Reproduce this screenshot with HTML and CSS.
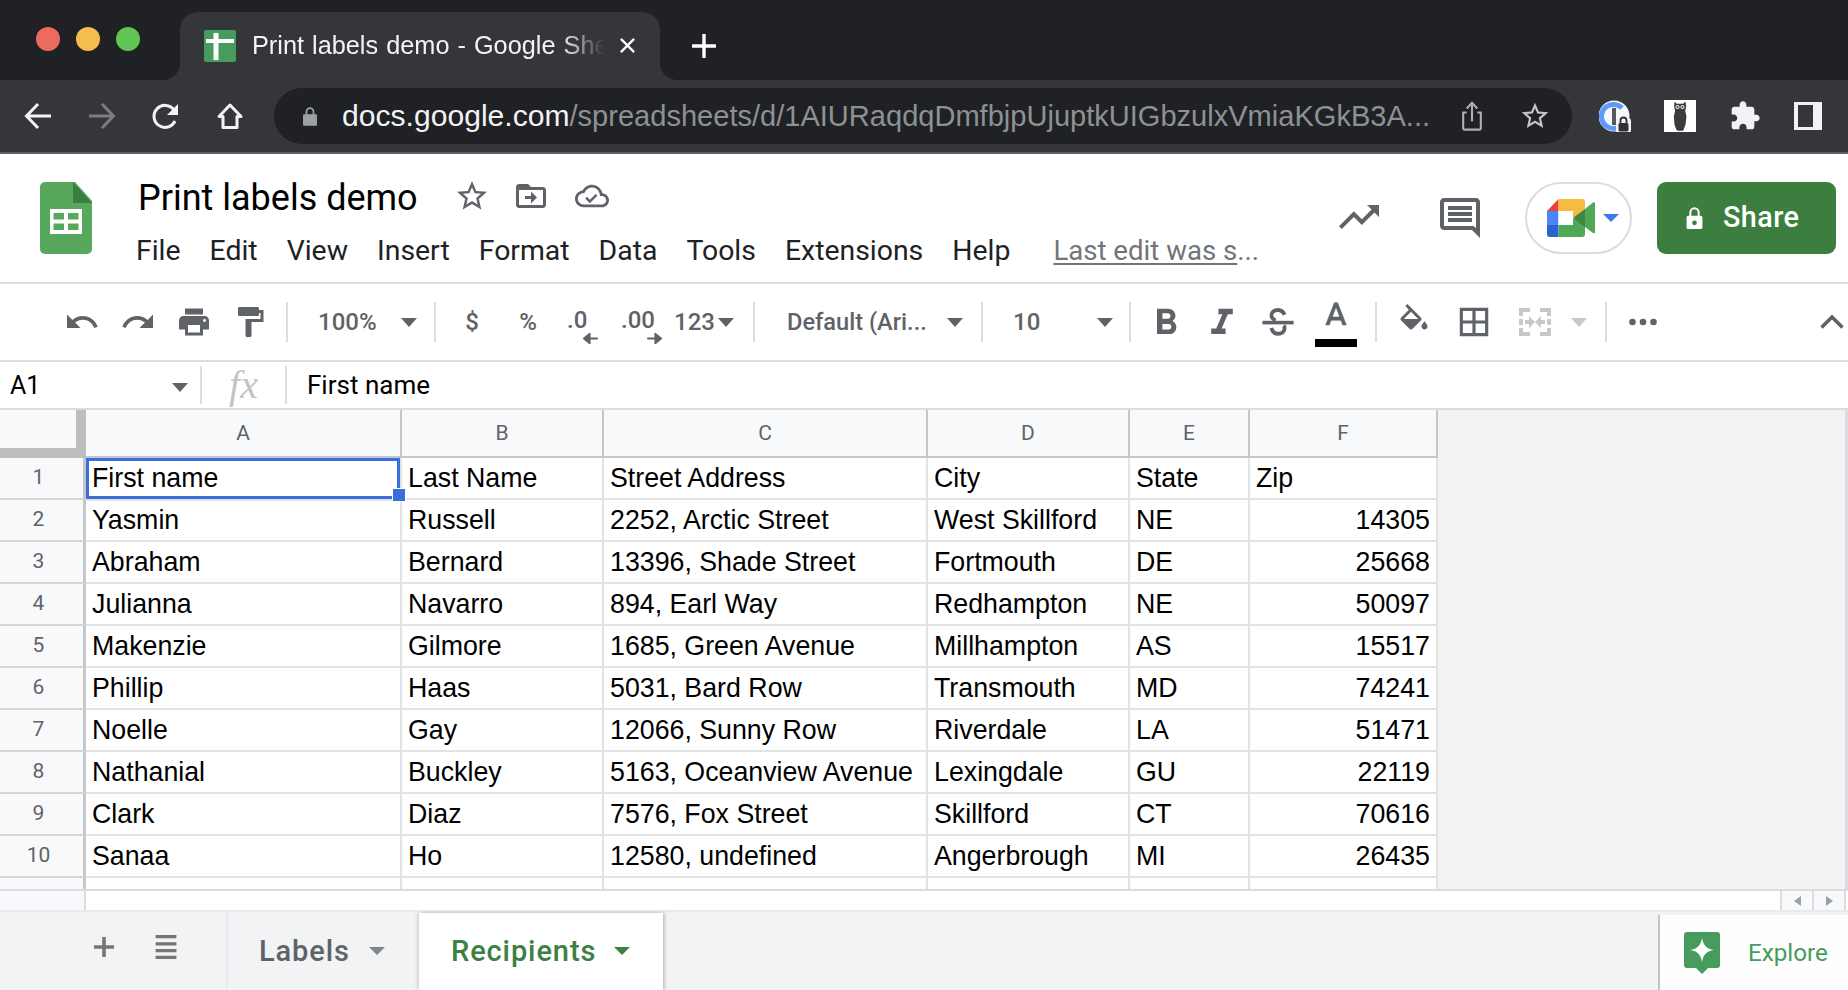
FILE: index.html
```html
<!DOCTYPE html>
<html lang="en">
<head>
<meta charset="utf-8">
<title>Print labels demo - Google Sheets</title>
<link rel="stylesheet" href="styles.css">
</head>
<body>
<div class="page">
  <div class="tabstrip">
    <div class="lights"><i class="red"></i><i class="yellow"></i><i class="green"></i></div>
    <div class="tab">
      <svg class="favicon" viewBox="0 0 32 32"><rect width="32" height="32" rx="2" fill="#459c5d"/><path d="M9.500 3h5v6H30v4H14.500v17h-5V13H2V9h7.500z" fill="#fff"/></svg>
      <span class="tabtitle">Print labels demo - Google Sheets</span>
      <svg class="tabclose" viewBox="0 0 18 18"><path d="M2 2l14 14M16 2L2 16" stroke="#fff" stroke-width="2.400"/></svg>
    </div>
    <svg class="newtab" viewBox="0 0 24 24"><path d="M12 1v22M1 12h22" stroke="#fff" stroke-width="3.400" stroke-linecap="round"/></svg>
  </div>

  <div class="browserbar">
    <div class="navbtn"><svg viewBox="0 0 28 28" width="28" height="28"><path d="M27 14H3M14 2L2.500 14 14 26" fill="none" stroke="#f1f3f4" stroke-width="3"/></svg></div>
    <div class="navbtn"><svg viewBox="0 0 28 28" width="28" height="28"><path d="M1 14h24M14 2l11.500 12L14 26" fill="none" stroke="#7b7c7f" stroke-width="3"/></svg></div>
    <div class="navbtn"><svg viewBox="0 0 28 28" width="28" height="28"><path d="M23 19a11 11 0 1 1-1-11" fill="none" stroke="#f1f3f4" stroke-width="3"/><path d="M26 2v11H15z" fill="#f1f3f4"/></svg></div>
    <div class="navbtn"><svg viewBox="0 0 28 28" width="28" height="28"><path d="M14 3L3 14.500h4V25.500h14V14.500h4z" fill="none" stroke="#f1f3f4" stroke-width="3" stroke-linejoin="round"/></svg></div>
    <div class="omnibox">
      <svg class="lockicon" viewBox="0 0 16 22"><path d="M1 9h14a1 1 0 0 1 1 1v11a1 1 0 0 1-1 1H1a1 1 0 0 1-1-1V10a1 1 0 0 1 1-1z" fill="#9aa0a6"/><path d="M4 10V6a4 4 0 0 1 8 0v4" fill="none" stroke="#9aa0a6" stroke-width="2"/></svg>
      <span class="url"><b>docs.google.com</b>/spreadsheets/d/1AIURaqdqDmfbjpUjuptkUIGbzulxVmiaKGkB3A...</span>
      <svg class="omni-share" viewBox="0 0 24 34"><path d="M6 13H2v18a1.500 1.500 0 0 0 1.500 1.500h17A1.500 1.500 0 0 0 22 31V13h-4M12 23V3M6 8.500L12 2l6 6.500" fill="none" stroke="#aeb0b3" stroke-width="2.400"/></svg>
      <svg class="omni-star" viewBox="0 0 24 24"><path d="M22 9.240l-7.190-.62L12 2 9.190 8.630 2 9.240l5.460 4.730L5.820 21 12 17.270 18.180 21l-1.630-7.030L22 9.240zM12 15.400l-3.760 2.270 1-4.280-3.320-2.880 4.380-.38L12 6.100l1.710 4.040 4.380.38-3.320 2.880 1 4.280L12 15.400z" fill="#c4c6c8"/></svg>
    </div>
    <div class="extensions">
      <svg class="ext-pass" viewBox="0 0 32 32"><circle cx="15" cy="16" r="15.500" fill="#f4f7fb"/><path d="M23 8A12 12 0 1 0 19 27.500" fill="none" stroke="#5a9cf8" stroke-width="5"/><rect x="13" y="8" width="4" height="17" fill="#56595e"/><rect x="17" y="18" width="15" height="15" rx="3" fill="#f4f4f4"/><rect x="19.500" y="23" width="10" height="8.500" rx="1.500" fill="#2f3134"/><path d="M21.500 23v-2.500a3 3 0 0 1 6 0V23" fill="none" stroke="#2f3134" stroke-width="1.800"/></svg>
      <svg class="ext-owl" viewBox="0 0 32 52"><rect width="32" height="52" fill="#fff"/><path d="M7 3l4 3h10l4-3 1 8-1.500 7 2 9-1.500 13-3 8-1 2h-9l-2-2-3-8L6 27l2-9-1.500-7z" fill="#3a3b3d"/><circle cx="12" cy="11.500" r="3.500" fill="#dcdcdc"/><circle cx="20" cy="11.500" r="3.500" fill="#dcdcdc"/><circle cx="12" cy="11.500" r="1.400" fill="#222"/><circle cx="20" cy="11.500" r="1.400" fill="#222"/></svg>
      <svg class="ext-puzzle" viewBox="0 0 24 24"><path d="M20.500 11H19V7c0-1.100-.9-2-2-2h-4V3.500C13 2.120 11.880 1 10.500 1S8 2.120 8 3.500V5H4c-1.100 0-1.990.9-1.990 2v3.800H3.500c1.490 0 2.700 1.210 2.700 2.700s-1.210 2.700-2.700 2.700H2V20c0 1.100.9 2 2 2h3.800v-1.500c0-1.490 1.210-2.700 2.700-2.700 1.490 0 2.700 1.210 2.700 2.700V22H17c1.100 0 2-.9 2-2v-4h1.500c1.380 0 2.500-1.120 2.500-2.500S21.880 11 20.500 11z" fill="#f1f3f4"/></svg>
      <div class="ext-panel"></div>
    </div>
  </div>

  <div class="docheader">
    <svg class="sheetlogo" viewBox="0 0 52 72"><path d="M5 0h30l17 19v48a5 5 0 0 1-5 5H5a5 5 0 0 1-5-5V5a5 5 0 0 1 5-5z" fill="#57a75c"/><path d="M33 0l19 21H33z" fill="#3a7d42"/><path d="M10 27h32v25H10zm3.500 4v6.500H24V31zm14.500 0v6.500h10.500V31zM13.500 41.500V48H24v-6.500zm14.500 0V48h10.500v-6.500z" fill="#fff" fill-rule="evenodd"/></svg>
    <div class="titleblock">
      <div class="titlerow">
        <span class="doctitle">Print labels demo</span>
        <svg class="ti-star" viewBox="0 0 24 24"><path d="M22 9.240l-7.190-.62L12 2 9.190 8.630 2 9.240l5.460 4.730L5.820 21 12 17.270 18.180 21l-1.630-7.030L22 9.240zM12 15.400l-3.760 2.270 1-4.280-3.320-2.880 4.380-.38L12 6.100l1.710 4.040 4.380.38-3.320 2.880 1 4.280L12 15.400z"/></svg>
        <svg class="ti-folder" viewBox="0 0 24 24"><path d="M20 6h-8l-2-2H4c-1.100 0-2 .9-2 2v12c0 1.100.9 2 2 2h16c1.100 0 2-.9 2-2V8c0-1.100-.9-2-2-2zm0 12H4V8h16v10zm-8-1l4-4-4-4v3H8v2h4z"/></svg>
        <svg class="ti-cloud" viewBox="0 0 24 24"><path d="M19.350 10.040C18.670 6.590 15.640 4 12 4 9.110 4 6.600 5.640 5.350 8.040 2.340 8.360 0 10.910 0 14c0 3.310 2.690 6 6 6h13c2.760 0 5-2.240 5-5 0-2.640-2.050-4.780-4.650-4.960zM19 18H6c-2.210 0-4-1.790-4-4 0-2.050 1.530-3.760 3.560-3.970l1.070-.11.5-.95C8.080 7.140 9.940 6 12 6c2.620 0 4.880 1.860 5.390 4.430l.3 1.500 1.530.11c1.560.1 2.780 1.410 2.780 2.960 0 1.650-1.350 3-3 3zm-8.500-3.300l-2.100-2.100-1.200 1.200 3.300 3.300 5.300-5.300-1.200-1.200z"/></svg>
      </div>
      <div class="menubar">
        <span>File</span><span>Edit</span><span>View</span><span>Insert</span><span>Format</span><span>Data</span><span>Tools</span><span>Extensions</span><span>Help</span>
        <span class="lastedit"><u>Last edit was s</u>...</span>
      </div>
    </div>
    <div class="headeractions">
      <svg class="ha-trend" viewBox="0 0 24 24"><path d="M16 6l2.290 2.290-4.880 4.880-4-4L2 16.590 3.410 18l6-6 4 4 6.300-6.290L22 12V6z"/></svg>
      <svg class="ha-comment" viewBox="0 0 24 24"><path d="M20 2H4c-1.100 0-2 .9-2 2v12c0 1.100.9 2 2 2h14l4 4V4c0-1.100-.9-2-2-2zm0 15.170L18.830 16H4V4h16v13.170zM6 12h12v2H6zm0-3h12v2H6zm0-3h12v2H6z"/></svg>
      <div class="meetpill">
        <svg class="meetlogo" viewBox="0 0 48 38">
          <path d="M11.500 0L0 12h11.500z" fill="#ea4335"/>
          <path d="M11.500 0H35a3 3 0 0 1 3 3v15H26v-6H11.500z" fill="#f6bb40"/>
          <path d="M0 12h11.500v14H0z" fill="#4a86f7"/>
          <path d="M0 26h11.500v12H3a3 3 0 0 1-3-3z" fill="#2b62d0"/>
          <path d="M11.500 26H26v-6h12v15a3 3 0 0 1-3 3H11.500z" fill="#4fa954"/>
          <path d="M26 19L38 10v18z" fill="#3a8a42"/>
          <path d="M38 10l8-6.500c1-.6 2-.2 2 1V33c0 1.200-1 1.600-2 1L38 28z" fill="#4fa954"/>
          <path d="M11.500 12H26v14H11.500z" fill="#fff"/>
        </svg>
        <i class="meetcaret"></i>
      </div>
      <div class="sharebtn">
        <svg viewBox="0 0 24 30" width="19" height="24"><path d="M20 12h-1.500V8a6.500 6.500 0 0 0-13 0v4H4a2 2 0 0 0-2 2v13a2 2 0 0 0 2 2h16a2 2 0 0 0 2-2V14a2 2 0 0 0-2-2zM12 24a3 3 0 1 1 0-6 3 3 0 0 1 0 6zM8 12V8a4 4 0 0 1 8 0v4z" fill="#fff"/></svg>
        <span>Share</span>
      </div>
    </div>
  </div>

  <div class="toolbar">
    <div class="tbtn"><svg viewBox="0 0 24 24"><path d="M12.500 8c-2.650 0-5.050.99-6.900 2.600L2 7v9h9l-3.620-3.620c1.390-1.160 3.160-1.880 5.120-1.880 3.540 0 6.550 2.310 7.600 5.500l2.370-.78C21.080 11.030 17.150 8 12.500 8z"/></svg></div>
    <div class="tbtn"><svg viewBox="0 0 24 24"><path d="M18.400 10.600C16.550 8.990 14.150 8 11.500 8c-4.650 0-8.580 3.030-9.960 7.220L3.900 16c1.050-3.190 4.050-5.500 7.600-5.500 1.950 0 3.730.72 5.120 1.880L13 16h9V7l-3.600 3.600z"/></svg></div>
    <div class="tbtn"><svg viewBox="0 0 24 24"><path d="M19 8H5c-1.660 0-3 1.340-3 3v6h4v4h12v-4h4v-6c0-1.660-1.340-3-3-3zm-3 11H8v-5h8v5zm3-7c-.55 0-1-.45-1-1s.45-1 1-1 1 .45 1 1-.45 1-1 1zm-1-9H6v4h12V3z"/></svg></div>
    <div class="tbtn"><svg viewBox="0 0 24 24"><path d="M18 4V3c0-.55-.45-1-1-1H5c-.55 0-1 .45-1 1v4c0 .55.45 1 1 1h12c.55 0 1-.45 1-1V6h1v4H9v11c0 .55.45 1 1 1h2c.55 0 1-.45 1-1v-9h8V4h-3z"/></svg></div>
    <i class="tsep ml8"></i>
    <div class="ddl zoomddl"><span>100%</span><i class="caret"></i></div>
    <i class="tsep"></i>
    <div class="tbtn txt ml8">$</div>
    <div class="tbtn txt">%</div>
    <div class="tbtn dec"><span>.0</span><svg class="decarrow decleft" viewBox="0 0 16 12"><path d="M16 6H5M7 1L1 6l6 5V1z"/></svg></div>
    <div class="tbtn dec"><span>.00</span><svg class="decarrow decright" viewBox="0 0 16 12"><path d="M0 6h11M9 1l6 5-6 5V1z"/></svg></div>
    <div class="ddl numddl"><span>123</span><i class="caret"></i></div>
    <i class="tsep"></i>
    <div class="ddl fontddl"><span>Default (Ari...</span><i class="caret"></i></div>
    <i class="tsep"></i>
    <div class="ddl sizeddl"><span>10</span><i class="caret"></i></div>
    <i class="tsep"></i>
    <div class="tbtn ml7"><svg viewBox="0 0 24 24"><path d="M15.600 10.790c.97-.67 1.650-1.770 1.650-2.790 0-2.260-1.750-4-4-4H7v14h7.040c2.090 0 3.710-1.700 3.710-3.790 0-1.520-.86-2.820-2.150-3.420zM10 6.500h3c.83 0 1.500.67 1.500 1.500s-.67 1.500-1.500 1.500h-3v-3zm3.500 9H10v-3h3.500c.83 0 1.500.67 1.500 1.500s-.67 1.500-1.500 1.500z" transform="translate(-2.400 -1.600) scale(1.200)"/></svg></div>
    <div class="tbtn"><svg viewBox="0 0 24 24"><path d="M10 4v3h2.210l-3.420 8H6v3h8v-3h-2.210l3.420-8H18V4z" transform="translate(-2.400 -1.600) scale(1.200)"/></svg></div>
    <div class="tbtn"><svg viewBox="0 0 30 30"><path d="M20.500 9C19.500 6.500 17.500 5 15 5c-3.200 0-5.500 1.800-5.500 4.500 0 2 1.200 3.300 3.500 4.200M9.500 20c.8 3 3 4.800 5.500 4.800 3.200 0 5.500-1.800 5.500-4.600 0-1-.3-1.700-.8-2.200" fill="none" stroke="#5f6368" stroke-width="3.200"/><rect x="2" y="14" width="26" height="3"/></svg></div>
    <div class="tbtn colorA ml2"><svg viewBox="0 0 24 24" class="aglyph"><path d="M11 3L5.500 17h2.250l1.120-3h6.250l1.120 3h2.250L13 3h-2zm-1.380 9L12 5.670 14.380 12H9.620z" stroke="#5f6368" stroke-width=".4"/></svg><i class="colorbar"></i></div>
    <i class="tsep ml11"></i>
    <div class="tbtn ml9"><svg viewBox="0 0 24 24"><path d="M16.560 8.940L7.620 0 6.210 1.410l2.380 2.380-5.150 5.150c-.59.59-.59 1.540 0 2.120l5.500 5.500c.29.29.68.44 1.060.44s.77-.15 1.060-.44l5.500-5.500c.59-.58.59-1.530 0-2.120zM5.210 10L10 5.210 14.790 10H5.210zM19 11.500s-2 2.170-2 3.500c0 1.100.9 2 2 2s2-.9 2-2c0-1.330-2-3.500-2-3.500z"/></svg></div>
    <div class="tbtn ml4"><svg class="bordersicon" viewBox="0 0 24 24"><path d="M3 3v18h18V3H3zm8 16H5v-6h6v6zm0-8H5V5h6v6zm8 8h-6v-6h6v6zm0-8h-6V5h6v6z"/></svg></div>
    <div class="tbtn ml5"><svg class="mergeicon" viewBox="0 0 32 28"><path d="M0 0h11v4H4v4H0zM21 0h11v8h-4V4h-7zM0 11h4v6H0zM28 11h4v6h-4zM0 20h4v4h7v4H0zM28 20h4v8H21v-4h7zM6 12h4V8l6 6-6 6v-4H6zM26 12h-4V8l-6 6 6 6v-4h4z" fill="#c6c7c8"/></svg></div>
    <div class="mergecaret"><i class="caret muted"></i></div>
    <i class="tsep ml10"></i>
    <div class="tbtn ml8"><svg viewBox="0 0 24 24"><circle cx="5" cy="12" r="2.200"/><circle cx="12" cy="12" r="2.200"/><circle cx="19" cy="12" r="2.200"/></svg></div>
    <svg class="collapse" viewBox="0 0 24 16"><path d="M1.500 13.500L12 3l10.500 10.500" fill="none" stroke="#5f6368" stroke-width="3.600"/></svg>
  </div>

  <div class="formulabar">
    <div class="namebox"><span>A1</span><i class="caret"></i></div>
    <i class="fsep"></i>
    <span class="fx">fx</span>
    <i class="fsep"></i>
    <span class="ftext">First name</span>
  </div>

  <div class="sheet">
    <div class="corner"><i></i></div>
    <div class="ch">A</div><div class="ch">B</div><div class="ch">C</div><div class="ch">D</div><div class="ch">E</div><div class="ch">F</div>
    <div class="empty"></div>

    <div class="rh">1</div><div class="c sel">First name</div><div class="c">Last Name</div><div class="c">Street Address</div><div class="c">City</div><div class="c">State</div><div class="c">Zip</div>
    <div class="rh">2</div><div class="c">Yasmin</div><div class="c">Russell</div><div class="c">2252, Arctic Street</div><div class="c">West Skillford</div><div class="c">NE</div><div class="c n">14305</div>
    <div class="rh">3</div><div class="c">Abraham</div><div class="c">Bernard</div><div class="c">13396, Shade Street</div><div class="c">Fortmouth</div><div class="c">DE</div><div class="c n">25668</div>
    <div class="rh">4</div><div class="c">Julianna</div><div class="c">Navarro</div><div class="c">894, Earl Way</div><div class="c">Redhampton</div><div class="c">NE</div><div class="c n">50097</div>
    <div class="rh">5</div><div class="c">Makenzie</div><div class="c">Gilmore</div><div class="c">1685, Green Avenue</div><div class="c">Millhampton</div><div class="c">AS</div><div class="c n">15517</div>
    <div class="rh">6</div><div class="c">Phillip</div><div class="c">Haas</div><div class="c">5031, Bard Row</div><div class="c">Transmouth</div><div class="c">MD</div><div class="c n">74241</div>
    <div class="rh">7</div><div class="c">Noelle</div><div class="c">Gay</div><div class="c">12066, Sunny Row</div><div class="c">Riverdale</div><div class="c">LA</div><div class="c n">51471</div>
    <div class="rh">8</div><div class="c">Nathanial</div><div class="c">Buckley</div><div class="c">5163, Oceanview Avenue</div><div class="c">Lexingdale</div><div class="c">GU</div><div class="c n">22119</div>
    <div class="rh">9</div><div class="c">Clark</div><div class="c">Diaz</div><div class="c">7576, Fox Street</div><div class="c">Skillford</div><div class="c">CT</div><div class="c n">70616</div>
    <div class="rh">10</div><div class="c">Sanaa</div><div class="c">Ho</div><div class="c">12580, undefined</div><div class="c">Angerbrough</div><div class="c">MI</div><div class="c n">26435</div>
    <div class="rh last"></div><div class="c last"></div><div class="c last"></div><div class="c last"></div><div class="c last"></div><div class="c last"></div><div class="c last"></div>
  </div>

  <div class="hscroll">
    <div class="hs-gutter"></div>
    <div class="hs-track"></div>
    <div class="hs-btn"><i class="tri-left"></i></div>
    <div class="hs-btn"><i class="tri-right"></i></div>
    <div class="hs-end"></div>
  </div>

  <div class="sheettabs">
    <svg class="st-add" viewBox="0 0 22 22"><path d="M11 1v20M1 11h20" stroke="#757575" stroke-width="3.600"/></svg>
    <svg class="st-list" viewBox="0 0 26 30"><path d="M0 2h26M0 11h26M0 19.500h26M0 28h26" stroke="#757575" stroke-width="4"/></svg>
    <div class="stab"><span>Labels</span><i class="stcaret"></i></div>
    <div class="stab active"><span>Recipients</span><i class="stcaret"></i></div>
    <div class="explore">
      <svg viewBox="0 0 36 42" width="36" height="42"><path d="M3 0h30a3 3 0 0 1 3 3v30a3 3 0 0 1-3 3h-9l-6 6-6-6H3a3 3 0 0 1-3-3V3a3 3 0 0 1 3-3z" fill="#459c5d"/><path d="M18 6c1.200 7.500 4.500 10.800 12 12-7.500 1.200-10.800 4.500-12 12-1.200-7.500-4.500-10.800-12-12 7.500-1.200 10.800-4.500 12-12z" fill="#fff"/></svg>
      <span>Explore</span>
    </div>
  </div>
</div>
</body>
</html>
```

FILE: styles.css
```css
* { box-sizing: border-box; }
html, body { margin: 0; padding: 0; height: 100%; overflow: hidden; background: #fff; }
i { display: block; font-style: normal; }
svg { display: block; flex: none; }
.page { width: 1848px; height: 990px; display: flex; flex-direction: column; overflow: hidden; font-family: Roboto, "Liberation Sans", sans-serif; }

/* browser tab strip */
.tabstrip { height: 80px; flex: none; background: #202124; display: flex; align-items: flex-end; }
.lights { display: flex; gap: 16px; width: 180px; padding-left: 36px; align-self: flex-start; margin-top: 27px; }
.lights i { width: 24px; height: 24px; border-radius: 50%; }
.red { background: #ee6a5f; }
.yellow { background: #f5bd4f; }
.green { background: #61c554; }
.tab { position: relative; width: 480px; height: 68px; background: #35363a; border-radius: 18px 18px 0 0; display: flex; align-items: center; padding-left: 24px; padding-bottom: 1px; }
.tab::before, .tab::after { content: ""; position: absolute; bottom: 0; width: 16px; height: 16px; }
.tab::before { left: -16px; background: radial-gradient(circle at 0 0, transparent 15.500px, #35363a 16px); }
.tab::after { right: -16px; background: radial-gradient(circle at 100% 0, transparent 15.500px, #35363a 16px); }
.favicon { width: 32px; height: 32px; }
.tabtitle { width: 352px; margin-left: 16px; font: 25.300px "Liberation Sans", sans-serif; word-spacing: 1px; color: #f1f3f4; white-space: nowrap; overflow: hidden; -webkit-mask-image: linear-gradient(90deg, #000 88%, transparent 100%); mask-image: linear-gradient(90deg, #000 88%, transparent 100%); }
.tabclose { width: 17px; height: 17px; margin-left: 15px; }
.newtab { width: 24px; height: 24px; margin-left: 32px; align-self: center; margin-top: 12px; }

/* browser toolbar */
.browserbar { height: 74px; flex: none; background: #35363a; border-bottom: 2px solid #5f6063; display: flex; align-items: center; padding: 0 0 0 6px; }
.navbtn { width: 64px; display: flex; justify-content: center; }
.omnibox { width: 1298px; height: 56px; margin-left: 12px; border-radius: 28px; background: #202124; display: flex; align-items: center; padding-left: 29px; }
.lockicon { width: 14px; height: 20px; }
.url { width: 1112px; margin-left: 25px; font: 29.050px "Liberation Sans", sans-serif; color: #8e9194; white-space: nowrap; overflow: hidden; }
.url b { font-weight: 400; font-size: 30.100px; color: #f1f3f4; }
.omni-share { width: 24px; height: 30px; margin-left: 6px; }
.omni-star { width: 32px; height: 32px; margin-left: 35px; }
.extensions { display: flex; align-items: center; margin-left: 27px; }
.ext-pass { width: 32px; height: 32px; }
.ext-owl { width: 32px; height: 32px; margin-left: 33px; background: #fff; }
.ext-puzzle { width: 32px; height: 32px; margin-left: 33px; }
.ext-panel { width: 28px; height: 28px; margin-left: 33px; border: solid #f1f3f4; border-width: 3px 9px 3px 4px; }

/* doc header */
.docheader { height: 130px; flex: none; border-bottom: 2px solid #dadce0; display: flex; padding-left: 40px; }
.sheetlogo { width: 52px; height: 72px; margin-top: 28px; }
.titleblock { margin-left: 45px; display: flex; flex-direction: column; }
.titlerow { display: flex; align-items: center; height: 48px; margin-top: 18px; }
.doctitle { font-size: 36px; color: #000; margin-left: 1px; padding-top: 3px; line-height: 44px; width: 319px; white-space: nowrap; }
.titlerow svg { fill: #5f6368; }
.ti-star { width: 36px; height: 36px; margin-left: -3px; }
.ti-folder { width: 36px; height: 36px; margin-left: 23px; }
.ti-cloud { width: 34px; height: 34px; margin-left: 26px; }
.menubar { display: flex; align-items: baseline; gap: 29px; margin-top: 13px; margin-left: -1px; font-size: 28.400px; line-height: 36px; color: #202124; white-space: nowrap; }
.lastedit { color: #70757a; margin-left: 14px; font-size: 27.600px; }
.lastedit u { text-underline-offset: 3px; }
.headeractions { margin-left: auto; display: flex; align-items: flex-start; padding-right: 12px; padding-top: 28px; }
.headeractions svg { fill: #5f6368; }
.ha-trend { width: 48px; height: 48px; margin-top: 11px; }
.ha-comment { width: 48px; height: 48px; margin-left: 53px; margin-top: 12px; }
.meetpill { width: 107px; height: 72px; margin-left: 41px; border: 2px solid #dadce0; border-radius: 36px; display: flex; align-items: center; padding-left: 20px; }
.meetlogo { width: 48px; height: 38px; }
.meetcaret { width: 0; height: 0; margin-left: 8px; border: solid transparent; border-width: 8px 8px 0; border-top-color: #3b78e7; }
.sharebtn { width: 179px; height: 72px; margin-left: 25px; border-radius: 9px; background: #3c7e40; display: flex; align-items: center; padding-left: 28px; color: #fff; font-size: 28.800px; font-weight: 500; }
.sharebtn svg { fill: #fff; }
.sharebtn span { margin-left: 19px; letter-spacing: .4px; padding-bottom: 3px; }

/* toolbar */
.toolbar { height: 78px; flex: none; border-bottom: 2px solid #dadce0; display: flex; align-items: center; padding-left: 54px; color: #5f6368; font-size: 24px; font-weight: 500; }
.tbtn { position: relative; width: 56px; height: 60px; display: flex; align-items: center; justify-content: center; }
.tbtn svg { width: 36px; height: 36px; fill: #5f6368; }
.tsep { width: 2px; height: 40px; background: #dadce0; }
.ml2 { margin-left: 2px; } .ml4 { margin-left: 4px; } .ml5 { margin-left: 5px; } .ml7 { margin-left: 7px; } .ml8 { margin-left: 8px; } .ml9 { margin-left: 9px; } .ml10 { margin-left: 10px; } .ml11 { margin-left: 11px; }
.ddl { display: flex; align-items: center; justify-content: space-between; height: 60px; }
.zoomddl { width: 146px; padding: 0 17px 0 30px; }
.numddl { width: 85px; padding: 0 19px 0 6px; }
.fontddl { width: 226px; padding: 0 18px 0 32px; font-size: 23.600px; }
.sizeddl { width: 146px; padding: 0 16px 0 30px; }
.caret { width: 0; height: 0; border: solid transparent; border-width: 9px 8px 0; border-top-color: #5f6368; }
.caret.muted { border-top-color: #c6c7c8; }
.dec { flex-direction: column; align-items: flex-start; padding-left: 11px; }
.dec + .dec { padding-left: 9px; }
.dec span { line-height: 24px; margin-top: 8px; }
.tbtn .decarrow { width: 15px; height: 11px; margin-top: 1px; fill: #5f6368; stroke: #5f6368; stroke-width: 2.200; }
.decleft { margin-left: 16px; }
.decright { margin-left: 26px; }
.tbtn svg.bordersicon { width: 38px; height: 38px; }
.tbtn svg.mergeicon { width: 32px; height: 28px; }
.tbtn .aglyph { width: 38px; height: 38px; margin-top: -10px; }
.colorA { flex-direction: column; }
.colorbar { position: absolute; left: 7px; bottom: 5px; width: 42px; height: 8px; background: #000; }
.mergecaret { width: 32px; display: flex; justify-content: center; }
.collapse { width: 24px; height: 16px; margin-left: auto; margin-right: 4px; }

/* formula bar */
.formulabar { height: 48px; flex: none; border-bottom: 2px solid #dadce0; display: flex; align-items: center; font-size: 25px; color: #202124; }
.namebox { width: 200px; display: flex; align-items: center; justify-content: space-between; padding: 0 12px 0 10px; color: #000; }
.namebox .caret { margin-top: 4px; }
.fsep { width: 2px; height: 38px; background: #dadce0; }
.fx { width: 83px; text-align: center; font: italic 40px "Liberation Serif", serif; color: #c4c4c4; line-height: 46px; }
.ftext { margin-left: 20px; color: #000; font-size: 26px; }

/* grid */
.sheet { height: 479px; flex: none; display: grid; grid-template-columns: 86px 316px 202px 324px 202px 120px 188px 1fr; grid-template-rows: 48px repeat(10, 42px) 11px; background: #fff; font-family: "Liberation Sans", sans-serif; overflow: hidden; }
.corner { position: relative; background: #bdbdbd; padding: 0 10px 10px 0; }
.corner i { height: 100%; background: #f8f9fa; }
.ch { background: #f8f9fa; border-right: 2px solid #c4c6c8; border-bottom: 2px solid #c4c6c8; display: flex; align-items: center; justify-content: center; font: 21px Roboto, sans-serif; color: #5f6368; }
.empty { grid-column: 8; grid-row: 1 / -1; background: #f3f3f3; border-right: 3px solid #dadce0; }
.rh { background: #f8f9fa; border-right: 3px solid #c4c6c8; border-bottom: 2px solid #d4d5d6; display: flex; align-items: center; justify-content: center; padding-right: 6px; font: 21px Roboto, sans-serif; color: #5f6368; padding-bottom: 3px; }
.c { position: relative; border-right: 2px solid #e2e3e3; border-bottom: 2px solid #e2e3e3; padding: 1px 6px 0; font-size: 26.750px; line-height: 39px; color: #000; white-space: nowrap; overflow: visible; }
.c.n { text-align: right; }
.c.last, .rh.last { border-bottom: 0; }
.c.sel { box-shadow: inset 0 0 0 3px #3a6fdb; margin-bottom: -2px; height: 43px; z-index: 1; }
.c.sel::after { content: ""; position: absolute; right: -5px; bottom: -2px; width: 12px; height: 12px; background: #3a6fdb; outline: 1px solid #fff; }

/* horizontal scroll */
.hscroll { height: 23px; flex: none; border-top: 2px solid #dadce0; border-bottom: 2px solid #e8eaed; display: flex; background: #fff; }
.hs-gutter { width: 86px; background: #f8f9fa; border-right: 2px solid #dadce0; }
.hs-track { flex: 1; }
.hs-btn { width: 32px; background: #f8f9fa; border-left: 2px solid #dadce0; display: flex; align-items: center; justify-content: center; }
.hs-end { width: 4px; border-left: 2px solid #dadce0; }
.tri-left { width: 0; height: 0; border: solid transparent; border-width: 5px 7px 5px 0; border-right-color: #9aa0a6; }
.tri-right { width: 0; height: 0; border: solid transparent; border-width: 5px 0 5px 7px; border-left-color: #9aa0a6; }

/* sheet tabs */
.sheettabs { flex: 1; background: #f1f3f4; display: flex; align-items: stretch; padding-left: 93px; }
.st-add { width: 22px; height: 22px; align-self: flex-start; margin-top: 24px; }
.st-list { width: 26px; height: 24px; align-self: flex-start; margin-top: 23px; margin-left: 38px; }
.stab { display: flex; align-items: center; font-size: 29px; font-weight: 500; letter-spacing: .9px; color: #5f6368; width: 193px; padding: 0 0 1px 31px; border-left: 2px solid #e8eaed; margin-left: 47px; }
.stcaret { width: 0; height: 0; margin-left: 19px; border: solid transparent; border-width: 8px 8px 0; border-top-color: #80868b; }
.stab.active { width: 244px; margin-top: 1px; margin-left: 0; padding-left: 32px; background: #fff; color: #3c8043; border-left: 0; box-shadow: 2px 0 3px rgba(0,0,0,.2), -2px 0 3px rgba(0,0,0,.12); }
.stab.active .stcaret { border-top-color: #3c8043; margin-left: 18px; }
.explore { margin-left: auto; width: 190px; margin-top: 3px; background: #fdfefd; border-left: 2px solid #c4c4c4; display: flex; align-items: flex-start; padding: 17px 0 0 24px; color: #459c5d; font-size: 24.200px; }
.explore span { margin-left: 28px; line-height: 36px; margin-top: 3px; }
```
